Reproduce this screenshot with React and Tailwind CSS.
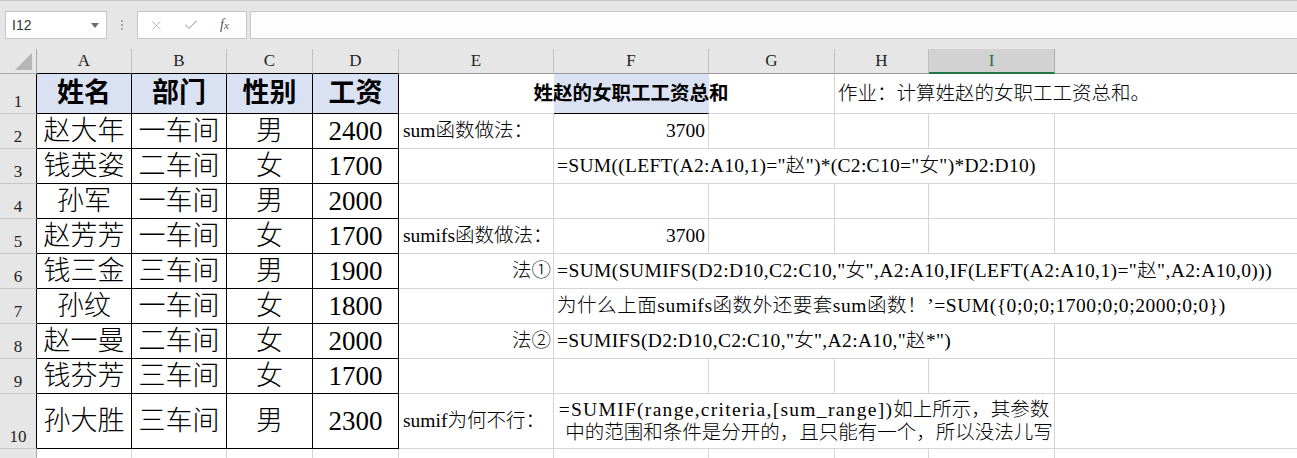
import React from 'react';
import { X, Check } from 'lucide-react';

// 宋体-like look: serif latin, CJK falls back to Noto
const serif = "font-['Liberation_Serif','Noto_Sans_CJK_SC',serif]";

const people = [
  ['赵大年', '一车间', '男', '2400'],
  ['钱英姿', '二车间', '女', '1700'],
  ['孙军', '一车间', '男', '2000'],
  ['赵芳芳', '一车间', '女', '1700'],
  ['钱三金', '三车间', '男', '1900'],
  ['孙纹', '一车间', '女', '1800'],
  ['赵一曼', '二车间', '女', '2000'],
  ['钱芬芳', '三车间', '女', '1700'],
  ['孙大胜', '三车间', '男', '2300'],
];

const cols = ['A', 'B', 'C', 'D', 'E', 'F', 'G', 'H', 'I', 'J'];

const base = 'flex items-center whitespace-nowrap min-w-0 overflow-visible';
const grid = 'border-r border-b border-r-[#d4d4d4] border-b-[#d4d4d4]';
const black = 'border-r border-b border-r-black border-b-black';
const hideR = 'border-r border-b border-r-transparent border-b-[#d4d4d4]';

// columns E..J for each sheet row
const rest = {
  1: [
    { cls: hideR },
    { cls: 'border-r border-b border-r-transparent border-b-black bg-[#d9e1f2] justify-center font-bold', text: '姓赵的女职工工资总和' },
    { cls: grid },
    { span: 'col-span-3', cls: hideR + ' pl-[3px] font-light', text: '作业：计算姓赵的女职工工资总和。' },
  ],
  2: [
    { cls: grid + ' pl-[4px] font-light', text: 'sum函数做法：' },
    { cls: grid + ' justify-end pr-[3px]', text: '3700' },
    { cls: grid }, { cls: grid }, { cls: grid }, { cls: grid },
  ],
  3: [
    { cls: grid },
    { span: 'col-span-4', cls: grid + ' pl-[3px] tracking-[0.3px] font-light', text: '=SUM((LEFT(A2:A10,1)="赵")*(C2:C10="女")*D2:D10)' },
    { cls: grid },
  ],
  4: [{ cls: grid }, { cls: grid }, { cls: grid }, { cls: grid }, { cls: grid }, { cls: grid }],
  5: [
    { cls: grid + ' pl-[4px] font-light', text: 'sumifs函数做法：' },
    { cls: grid + ' justify-end pr-[3px]', text: '3700' },
    { cls: grid }, { cls: grid }, { cls: grid }, { cls: grid },
  ],
  6: [
    { cls: grid + ' justify-end pr-[2px] font-light', text: '法①' },
    { span: 'col-span-5', cls: grid + ' pl-[3px] tracking-[0.4px] font-light', text: '=SUM(SUMIFS(D2:D10,C2:C10,"女",A2:A10,IF(LEFT(A2:A10,1)="赵",A2:A10,0)))' },
  ],
  7: [
    { cls: grid },
    { span: 'col-span-5', cls: grid + ' pl-[3px] tracking-[0.55px] font-light', text: '为什么上面sumifs函数外还要套sum函数！’=SUM({0;0;0;1700;0;0;2000;0;0})' },
  ],
  8: [
    { cls: grid + ' justify-end pr-[2px] font-light', text: '法②' },
    { span: 'col-span-4', cls: grid + ' pl-[3px] tracking-[0.35px] font-light', text: '=SUMIFS(D2:D10,C2:C10,"女",A2:A10,"赵*")' },
    { cls: grid },
  ],
  9: [{ cls: grid }, { cls: grid }, { cls: grid }, { cls: grid }, { cls: grid }, { cls: grid }],
  10: [
    { cls: grid + ' pl-[4px] font-light', text: 'sumif为何不行：' },
    {
      span: 'col-span-4',
      cls: grid + ' justify-center text-center leading-[23px] font-light',
      text: (
        <span>
          <span className="tracking-[1.3px]">=SUMIF(range,criteria,[sum_range])</span>如上所示，其参数
          <br />
          <span className="pl-[10px]">中的范围和条件是分开的，且只能有一个，所以没法儿写</span>
        </span>
      ),
    },
    { cls: grid },
  ],
  11: [{ cls: grid }, { cls: grid }, { cls: grid }, { cls: grid }, { cls: grid }, { cls: grid }],
};

function Toolbar() {
  return (
    <div className="h-[49px] bg-[#e6e6e6] border-t border-t-[#c8c8c8] flex items-start pt-[10px] font-['Liberation_Sans',sans-serif]">
      {/* name box */}
      <div className="ml-[5px] w-[102px] h-[28px] bg-white border border-[#c6c6c6] flex items-center justify-between pl-[6px] pr-[7px]">
        <span className="text-[14px] text-[#333]">I12</span>
        <svg width="8" height="5" viewBox="0 0 8 5">
          <polygon points="0,0 8,0 4,5" fill="#6b6b6b" />
        </svg>
      </div>
      <div className="w-[30px] h-[28px] flex flex-col items-center justify-center gap-[2px]">
        <span className="w-[2px] h-[2px] bg-[#a6a6a6]" />
        <span className="w-[2px] h-[2px] bg-[#a6a6a6]" />
        <span className="w-[2px] h-[2px] bg-[#a6a6a6]" />
      </div>
      {/* cancel / enter / fx */}
      <div className="w-[110px] h-[28px] bg-white border border-[#c6c6c6] flex items-center">
        <X size={15} strokeWidth={1.4} className="ml-[11px] text-[#b4b4b4]" />
        <Check size={16} strokeWidth={1.6} className="ml-[19px] text-[#b4b4b4]" />
        <span className="ml-[21px] italic text-[14px] text-[#555] font-['Liberation_Serif',serif] leading-none">
          f<span className="text-[11px]">x</span>
        </span>
      </div>
      {/* formula input */}
      <div className="ml-[3px] flex-1 h-[28px] bg-[#fdfdfd] border border-r-0 border-[#c6c6c6]" />
    </div>
  );
}

function App() {
  return (
    <div className={`w-[1297px] h-[458px] overflow-hidden bg-white text-black ${serif}`}>
      <Toolbar />
      <div className="grid grid-cols-[37px_95px_95px_86px_86px_155px_155px_126px_94px_126px_300px] grid-rows-[25px_40px_repeat(8,35px)_55px_30px] text-[19.5px]">
        {/* column header row */}
        <div className="bg-[#e6e6e6] border-r border-b border-r-[#ababab] border-b-[#ababab] flex items-end justify-end pr-[3px] pb-[2px]">
          <svg width="18" height="18" viewBox="0 0 18 18">
            <polygon points="17,0 17,17 0,17" fill="#b5b5b5" />
          </svg>
        </div>
        {cols.map((c, i) =>
          c === 'I' ? (
            <div key={c} className="bg-[#d2d2d2] border-r border-r-[#ababab] border-b-2 border-b-[#217346] flex items-center justify-center text-[17px] text-[#217346]">
              {c}
            </div>
          ) : (
            <div
              key={c}
              className={
                i < 4
                  ? 'bg-[#e6e6e6] border-r border-b border-r-[#c0c0c0] border-b-black flex items-center justify-center text-[17px] text-[#222]'
                  : 'bg-[#e6e6e6] border-r border-b border-r-[#c0c0c0] border-b-[#9b9b9b] flex items-center justify-center text-[17px] text-[#222]'
              }
            >
              {c === 'J' ? '' : c}
            </div>
          )
        )}

        {Array.from({ length: 11 }, (_, k) => {
          const r = k + 1;
          const left =
            r === 1
              ? ['姓名', '部门', '性别', '工资']
              : r <= 10
              ? people[r - 2]
              : null;
          return (
            <React.Fragment key={r}>
              <div
                className={
                  r <= 10
                    ? 'bg-[#e6e6e6] border-r border-b border-r-black border-b-[#c8c8c8] flex items-end justify-center pb-[1px] text-[17px] leading-[20px] text-[#222]'
                    : 'bg-[#e6e6e6] border-r border-b border-r-[#ababab] border-b-[#c8c8c8]'
                }
              >
                {r <= 10 ? r : null}
              </div>
              {left
                ? left.map((t, i) => (
                    <div
                      key={i}
                      className={
                        r === 1
                          ? `${base} ${black} justify-center bg-[#d9e1f2] font-bold text-[27px]`
                          : `${base} ${black} justify-center text-[27px] font-light`
                      }
                    >
                      {t}
                    </div>
                  ))
                : [0, 1, 2, 3].map((i) => <div key={i} className={`${base} ${grid}`} />)}
              {rest[r].map((cell, i) => (
                <div key={'e' + i} className={`${base} ${cell.span || ''} ${cell.cls}`}>
                  {cell.text}
                </div>
              ))}
            </React.Fragment>
          );
        })}
      </div>
    </div>
  );
}

export default App;
